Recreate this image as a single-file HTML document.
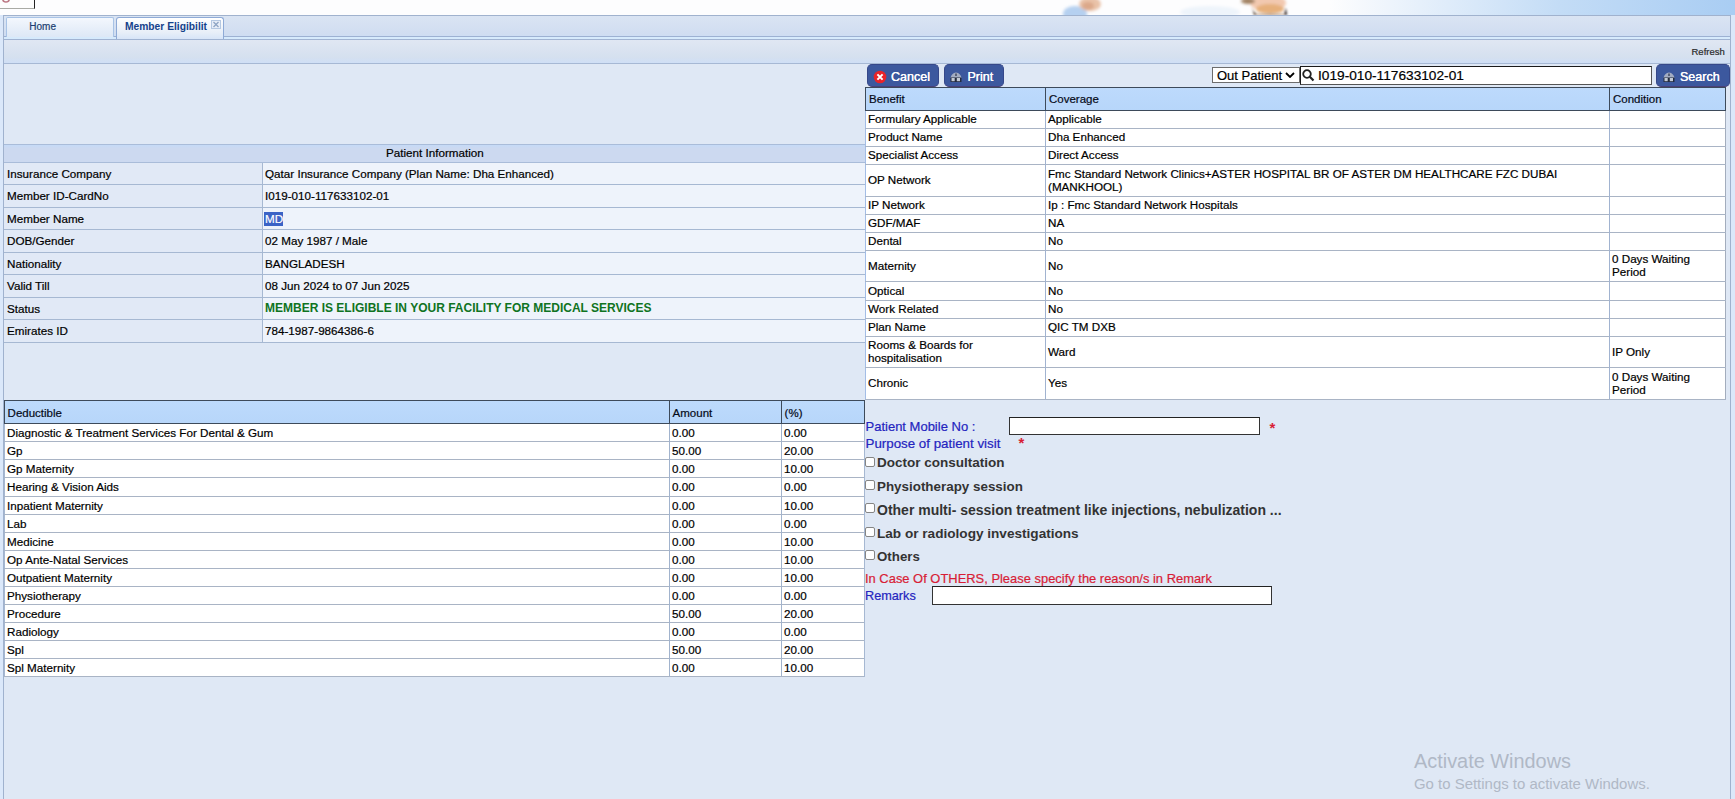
<!DOCTYPE html><html><head><meta charset="utf-8"><style>
*{margin:0;padding:0;box-sizing:border-box}
html,body{width:1735px;height:799px;overflow:hidden;background:#fff;font-family:"Liberation Sans", sans-serif}
.r{position:absolute}
.t{position:absolute;white-space:nowrap;line-height:1;font-family:"Liberation Sans", sans-serif;-webkit-text-stroke:0.2px currentColor}
.b{-webkit-text-stroke:0}
</style></head><body><div class="r" style="left:0px;top:0px;width:1735px;height:15px;background:linear-gradient(to right,#fdfdfe 0px,#fdfdfe 1330px,#e6f0fb 1420px,#c3dcf6 1560px,#a9cdf3 1735px)"></div>
<div class="r" style="left:0px;top:0px;width:35px;height:9px;background:#fdfdfd;border-right:1px solid #222;border-bottom:1px solid #a9aaa4"></div>
<svg class="r" style="left:0;top:0" width="14" height="5"><circle cx="6" cy="-1.2" r="3.2" stroke="#b0606e" stroke-width="1.6" fill="none" opacity=".85"/></svg>
<svg class="r" style="left:1040px;top:0px" width="280" height="15" viewBox="0 0 280 15">
<defs><filter id="bl" x="-50%" y="-50%" width="200%" height="200%"><feGaussianBlur stdDeviation="1.6"/></filter>
<filter id="bl2" x="-50%" y="-50%" width="200%" height="200%"><feGaussianBlur stdDeviation="0.8"/></filter></defs>
<g filter="url(#bl)">
<ellipse cx="35" cy="14" rx="12" ry="8" fill="#b5d0f0"/>
<ellipse cx="50" cy="4" rx="11" ry="7" fill="#e9c2a8"/>
<ellipse cx="48" cy="6" rx="6" ry="4" fill="#dba88a"/>
<ellipse cx="170" cy="12" rx="30" ry="6" fill="#eef4fb"/>
<ellipse cx="228" cy="3" rx="18" ry="8" fill="#f2c9b0"/>
<ellipse cx="230" cy="9" rx="14" ry="5" fill="#e6b07c"/>
<ellipse cx="208" cy="1" rx="7" ry="3" fill="#a08060"/>
</g>
<g filter="url(#bl2)">
<path d="M212 8 Q214 14 220 15 L214 15 Z" fill="#5c4634"/>
<path d="M246 8 L247 15 L244 15 Z" fill="#2e2422"/>
<path d="M216 14 Q230 13 244 14 L244 15 L216 15 Z" fill="#b08a6a"/>
</g>
</svg>
<div class="r" style="left:0px;top:15px;width:1735px;height:784px;background:#dbe8fa"></div>
<div class="r" style="left:3px;top:15px;width:1728px;height:784px;background:#dfe8f5;border-left:1px solid #a0b2ce;border-right:1px solid #a0b2ce"></div>
<div class="r" style="left:3px;top:15px;width:1728px;height:24px;background:linear-gradient(#dae4f3,#d0ddf1 80%,#c8dcf8);border:1px solid #a0b2ce;border-bottom:none"></div>
<div class="r" style="left:4px;top:36px;width:1726px;height:1px;background:#9db1d2"></div>
<div class="r" style="left:4px;top:37px;width:1726px;height:2px;background:#d6eafc"></div>
<div class="r" style="left:4px;top:39px;width:1726px;height:1px;background:#a0b3d2"></div>
<div class="r" style="left:6px;top:17px;width:108px;height:20px;background:linear-gradient(#f3f7fd,#dde8f6);border:1px solid #a8c3e6;border-bottom:none;border-radius:2px 2px 0 0"></div>
<div class="t" style="left:29.3px;top:22px;font-size:10px;color:#213f72;font-weight:normal;">Home</div>
<div class="r" style="left:116px;top:17px;width:108px;height:22px;background:linear-gradient(#ffffff,#e7eef8 70%,#d7e5f8);border:1px solid #8eaad6;border-bottom:none;border-radius:3px 3px 0 0"></div>
<div class="t b" style="left:125px;top:21.5px;font-size:10.25px;color:#15428b;font-weight:bold;">Member Eligibilit</div>
<div class="r" style="left:211px;top:20px;width:10px;height:9px;background:#e8eef8;border:1px solid #b5c8e2"></div>
<svg class="r" style="left:212px;top:21px" width="8" height="7"><path d="M1.5 1 L6.5 6 M6.5 1 L1.5 6" stroke="#8ea4c4" stroke-width="1.3"/></svg>
<div class="r" style="left:4px;top:40px;width:1726px;height:24px;background:linear-gradient(#e0e7f3,#d5e0ef 75%,#cfdff6);border-bottom:1px solid #a6b8d4"></div>
<div class="t" style="left:1691.5px;top:46.5px;font-size:9.5px;color:#2a2a2a;font-weight:normal;">Refresh</div>
<div class="r" style="left:4px;top:144px;width:861px;height:19px;background:linear-gradient(#c5daf7,#ccd9f0 20%,#ccd9f0);border-top:1px solid #a9bcd9;border-bottom:1px solid #a9bcd9"></div>
<div class="t" style="left:386px;top:147px;font-size:11.67px;color:#000;font-weight:normal;">Patient Information</div>
<div class="r" style="left:4px;top:163px;width:258px;height:21px;background:#e1e9f6"></div>
<div class="r" style="left:263px;top:163px;width:602px;height:21px;background:#eef3fb"></div>
<div class="r" style="left:4px;top:184px;width:861px;height:1px;background:#a6b8d2"></div>
<div class="t" style="left:7px;top:167.5px;font-size:11.67px;color:#000;font-weight:normal;">Insurance Company</div>
<div class="t" style="left:265px;top:167.5px;font-size:11.67px;color:#000;font-weight:normal;">Qatar Insurance Company (Plan Name: Dha Enhanced)</div>
<div class="r" style="left:4px;top:185px;width:258px;height:22px;background:#e1e9f6"></div>
<div class="r" style="left:263px;top:185px;width:602px;height:22px;background:#eef3fb"></div>
<div class="r" style="left:4px;top:207px;width:861px;height:1px;background:#a6b8d2"></div>
<div class="t" style="left:7px;top:190.0px;font-size:11.67px;color:#000;font-weight:normal;">Member ID-CardNo</div>
<div class="t" style="left:265px;top:190.0px;font-size:11.67px;color:#000;font-weight:normal;">I019-010-117633102-01</div>
<div class="r" style="left:4px;top:208px;width:258px;height:21px;background:#e1e9f6"></div>
<div class="r" style="left:263px;top:208px;width:602px;height:21px;background:#eef3fb"></div>
<div class="r" style="left:4px;top:229px;width:861px;height:1px;background:#a6b8d2"></div>
<div class="t" style="left:7px;top:212.5px;font-size:11.67px;color:#000;font-weight:normal;">Member Name</div>
<div class="r" style="left:264px;top:212px;width:19px;height:14px;background:#3b63c6"></div>
<div class="t" style="left:265px;top:212.5px;font-size:11.67px;color:#fff;font-weight:normal;">MD</div>
<div class="r" style="left:4px;top:230px;width:258px;height:22px;background:#e1e9f6"></div>
<div class="r" style="left:263px;top:230px;width:602px;height:22px;background:#eef3fb"></div>
<div class="r" style="left:4px;top:252px;width:861px;height:1px;background:#a6b8d2"></div>
<div class="t" style="left:7px;top:235.0px;font-size:11.67px;color:#000;font-weight:normal;">DOB/Gender</div>
<div class="t" style="left:265px;top:235.0px;font-size:11.67px;color:#000;font-weight:normal;">02 May 1987 / Male</div>
<div class="r" style="left:4px;top:253px;width:258px;height:21px;background:#e1e9f6"></div>
<div class="r" style="left:263px;top:253px;width:602px;height:21px;background:#eef3fb"></div>
<div class="r" style="left:4px;top:274px;width:861px;height:1px;background:#a6b8d2"></div>
<div class="t" style="left:7px;top:257.5px;font-size:11.67px;color:#000;font-weight:normal;">Nationality</div>
<div class="t" style="left:265px;top:257.5px;font-size:11.67px;color:#000;font-weight:normal;">BANGLADESH</div>
<div class="r" style="left:4px;top:275px;width:258px;height:22px;background:#e1e9f6"></div>
<div class="r" style="left:263px;top:275px;width:602px;height:22px;background:#eef3fb"></div>
<div class="r" style="left:4px;top:297px;width:861px;height:1px;background:#a6b8d2"></div>
<div class="t" style="left:7px;top:280.0px;font-size:11.67px;color:#000;font-weight:normal;">Valid Till</div>
<div class="t" style="left:265px;top:280.0px;font-size:11.67px;color:#000;font-weight:normal;">08 Jun 2024 to 07 Jun 2025</div>
<div class="r" style="left:4px;top:298px;width:258px;height:21px;background:#e1e9f6"></div>
<div class="r" style="left:263px;top:298px;width:602px;height:21px;background:#eef3fb"></div>
<div class="r" style="left:4px;top:319px;width:861px;height:1px;background:#a6b8d2"></div>
<div class="t" style="left:7px;top:302.5px;font-size:11.67px;color:#000;font-weight:normal;">Status</div>
<div class="t b" style="left:265px;top:302.0px;font-size:12px;color:#0f7322;font-weight:bold;">MEMBER IS ELIGIBLE IN YOUR FACILITY FOR MEDICAL SERVICES</div>
<div class="r" style="left:4px;top:320px;width:258px;height:22px;background:#e1e9f6"></div>
<div class="r" style="left:263px;top:320px;width:602px;height:22px;background:#eef3fb"></div>
<div class="r" style="left:4px;top:342px;width:861px;height:1px;background:#a6b8d2"></div>
<div class="t" style="left:7px;top:325.0px;font-size:11.67px;color:#000;font-weight:normal;">Emirates ID</div>
<div class="t" style="left:265px;top:325.0px;font-size:11.67px;color:#000;font-weight:normal;">784-1987-9864386-6</div>
<div class="r" style="left:262px;top:163px;width:1px;height:179px;background:#a6b8d2"></div>
<div class="r" style="left:4px;top:400px;width:861px;height:24px;background:linear-gradient(#bddafc,#b7d6fa);border:1px solid #3d4a5a"></div>
<div class="r" style="left:669px;top:401px;width:1px;height:22px;background:#3d4a5a"></div>
<div class="r" style="left:781px;top:401px;width:1px;height:22px;background:#3d4a5a"></div>
<div class="t" style="left:7.6px;top:407.5px;font-size:11.5px;color:#050a18;font-weight:normal;">Deductible</div>
<div class="t" style="left:672.6px;top:407.5px;font-size:11.5px;color:#050a18;font-weight:normal;">Amount</div>
<div class="t" style="left:784.6px;top:407.5px;font-size:11.5px;color:#050a18;font-weight:normal;">(%)</div>
<div class="r" style="left:4px;top:424px;width:861px;height:253px;background:#fff;border-left:1px solid #a6b8d2"></div>
<div class="r" style="left:4px;top:441px;width:861px;height:1px;background:#a9b4c5"></div>
<div class="t" style="left:7px;top:426.5px;font-size:11.67px;color:#000;font-weight:normal;">Diagnostic &amp; Treatment Services For Dental &amp; Gum</div>
<div class="t" style="left:672px;top:426.5px;font-size:11.67px;color:#000;font-weight:normal;">0.00</div>
<div class="t" style="left:784px;top:426.5px;font-size:11.67px;color:#000;font-weight:normal;">0.00</div>
<div class="r" style="left:4px;top:459px;width:861px;height:1px;background:#a9b4c5"></div>
<div class="t" style="left:7px;top:444.5px;font-size:11.67px;color:#000;font-weight:normal;">Gp</div>
<div class="t" style="left:672px;top:444.5px;font-size:11.67px;color:#000;font-weight:normal;">50.00</div>
<div class="t" style="left:784px;top:444.5px;font-size:11.67px;color:#000;font-weight:normal;">20.00</div>
<div class="r" style="left:4px;top:477px;width:861px;height:1px;background:#a9b4c5"></div>
<div class="t" style="left:7px;top:462.5px;font-size:11.67px;color:#000;font-weight:normal;">Gp Maternity</div>
<div class="t" style="left:672px;top:462.5px;font-size:11.67px;color:#000;font-weight:normal;">0.00</div>
<div class="t" style="left:784px;top:462.5px;font-size:11.67px;color:#000;font-weight:normal;">10.00</div>
<div class="r" style="left:4px;top:496px;width:861px;height:1px;background:#a9b4c5"></div>
<div class="t" style="left:7px;top:481.0px;font-size:11.67px;color:#000;font-weight:normal;">Hearing &amp; Vision Aids</div>
<div class="t" style="left:672px;top:481.0px;font-size:11.67px;color:#000;font-weight:normal;">0.00</div>
<div class="t" style="left:784px;top:481.0px;font-size:11.67px;color:#000;font-weight:normal;">0.00</div>
<div class="r" style="left:4px;top:514px;width:861px;height:1px;background:#a9b4c5"></div>
<div class="t" style="left:7px;top:499.5px;font-size:11.67px;color:#000;font-weight:normal;">Inpatient Maternity</div>
<div class="t" style="left:672px;top:499.5px;font-size:11.67px;color:#000;font-weight:normal;">0.00</div>
<div class="t" style="left:784px;top:499.5px;font-size:11.67px;color:#000;font-weight:normal;">10.00</div>
<div class="r" style="left:4px;top:532px;width:861px;height:1px;background:#a9b4c5"></div>
<div class="t" style="left:7px;top:517.5px;font-size:11.67px;color:#000;font-weight:normal;">Lab</div>
<div class="t" style="left:672px;top:517.5px;font-size:11.67px;color:#000;font-weight:normal;">0.00</div>
<div class="t" style="left:784px;top:517.5px;font-size:11.67px;color:#000;font-weight:normal;">0.00</div>
<div class="r" style="left:4px;top:550px;width:861px;height:1px;background:#a9b4c5"></div>
<div class="t" style="left:7px;top:535.5px;font-size:11.67px;color:#000;font-weight:normal;">Medicine</div>
<div class="t" style="left:672px;top:535.5px;font-size:11.67px;color:#000;font-weight:normal;">0.00</div>
<div class="t" style="left:784px;top:535.5px;font-size:11.67px;color:#000;font-weight:normal;">10.00</div>
<div class="r" style="left:4px;top:568px;width:861px;height:1px;background:#a9b4c5"></div>
<div class="t" style="left:7px;top:553.5px;font-size:11.67px;color:#000;font-weight:normal;">Op Ante-Natal Services</div>
<div class="t" style="left:672px;top:553.5px;font-size:11.67px;color:#000;font-weight:normal;">0.00</div>
<div class="t" style="left:784px;top:553.5px;font-size:11.67px;color:#000;font-weight:normal;">10.00</div>
<div class="r" style="left:4px;top:586px;width:861px;height:1px;background:#a9b4c5"></div>
<div class="t" style="left:7px;top:571.5px;font-size:11.67px;color:#000;font-weight:normal;">Outpatient Maternity</div>
<div class="t" style="left:672px;top:571.5px;font-size:11.67px;color:#000;font-weight:normal;">0.00</div>
<div class="t" style="left:784px;top:571.5px;font-size:11.67px;color:#000;font-weight:normal;">10.00</div>
<div class="r" style="left:4px;top:604px;width:861px;height:1px;background:#a9b4c5"></div>
<div class="t" style="left:7px;top:589.5px;font-size:11.67px;color:#000;font-weight:normal;">Physiotherapy</div>
<div class="t" style="left:672px;top:589.5px;font-size:11.67px;color:#000;font-weight:normal;">0.00</div>
<div class="t" style="left:784px;top:589.5px;font-size:11.67px;color:#000;font-weight:normal;">0.00</div>
<div class="r" style="left:4px;top:622px;width:861px;height:1px;background:#a9b4c5"></div>
<div class="t" style="left:7px;top:607.5px;font-size:11.67px;color:#000;font-weight:normal;">Procedure</div>
<div class="t" style="left:672px;top:607.5px;font-size:11.67px;color:#000;font-weight:normal;">50.00</div>
<div class="t" style="left:784px;top:607.5px;font-size:11.67px;color:#000;font-weight:normal;">20.00</div>
<div class="r" style="left:4px;top:640px;width:861px;height:1px;background:#a9b4c5"></div>
<div class="t" style="left:7px;top:625.5px;font-size:11.67px;color:#000;font-weight:normal;">Radiology</div>
<div class="t" style="left:672px;top:625.5px;font-size:11.67px;color:#000;font-weight:normal;">0.00</div>
<div class="t" style="left:784px;top:625.5px;font-size:11.67px;color:#000;font-weight:normal;">0.00</div>
<div class="r" style="left:4px;top:658px;width:861px;height:1px;background:#a9b4c5"></div>
<div class="t" style="left:7px;top:643.5px;font-size:11.67px;color:#000;font-weight:normal;">Spl</div>
<div class="t" style="left:672px;top:643.5px;font-size:11.67px;color:#000;font-weight:normal;">50.00</div>
<div class="t" style="left:784px;top:643.5px;font-size:11.67px;color:#000;font-weight:normal;">20.00</div>
<div class="r" style="left:4px;top:676px;width:861px;height:1px;background:#a9b4c5"></div>
<div class="t" style="left:7px;top:661.5px;font-size:11.67px;color:#000;font-weight:normal;">Spl Maternity</div>
<div class="t" style="left:672px;top:661.5px;font-size:11.67px;color:#000;font-weight:normal;">0.00</div>
<div class="t" style="left:784px;top:661.5px;font-size:11.67px;color:#000;font-weight:normal;">10.00</div>
<div class="r" style="left:669px;top:424px;width:1px;height:252px;background:#a1b3cd"></div>
<div class="r" style="left:781px;top:424px;width:1px;height:252px;background:#a1b3cd"></div>
<div class="r" style="left:864px;top:424px;width:1px;height:253px;background:#a6b8d2"></div>
<div class="r" style="left:867px;top:64px;width:72px;height:23px;background:#3c589e;border:1px solid #36488a;border-bottom-color:#4a3f78;border-radius:5px"></div>
<svg class="r" style="left:873px;top:70px" width="14" height="14"><circle cx="7" cy="7" r="6.3" fill="#e8242a"/><path d="M4.4 4.4 L9.6 9.6 M9.6 4.4 L4.4 9.6" stroke="#fff" stroke-width="2"/></svg>
<div class="t" style="left:891px;top:70.5px;font-size:12.5px;color:#fff;font-weight:normal;text-shadow:0 0 .3px #fff">Cancel</div>
<div class="r" style="left:944px;top:64px;width:60px;height:23px;background:#3c589e;border:1px solid #36488a;border-bottom-color:#4a3f78;border-radius:5px"></div>
<svg class="r" style="left:950px;top:72px" width="12" height="10"><path d="M0.5 6 Q1.5 1 6 0.5 Q10.5 1 11.5 6 Z" fill="#a3acc2"/><rect x="0.5" y="5.5" width="11" height="4.5" fill="#232b3e"/><rect x="1.5" y="6" width="3.2" height="3.2" fill="#c3cad6"/><rect x="6.8" y="6" width="3.2" height="3.2" fill="#c3cad6"/><rect x="5.3" y="1.5" width="1.4" height="2.5" fill="#3a4258"/></svg>
<div class="t" style="left:967.5px;top:70.5px;font-size:12.5px;color:#fff;font-weight:normal;text-shadow:0 0 .3px #fff">Print</div>
<div class="r" style="left:1656px;top:64px;width:74px;height:23px;background:#3c589e;border:1px solid #36488a;border-bottom-color:#4a3f78;border-radius:5px"></div>
<svg class="r" style="left:1663px;top:72px" width="12" height="10"><path d="M0.5 6 Q1.5 1 6 0.5 Q10.5 1 11.5 6 Z" fill="#a3acc2"/><rect x="0.5" y="5.5" width="11" height="4.5" fill="#232b3e"/><rect x="1.5" y="6" width="3.2" height="3.2" fill="#c3cad6"/><rect x="6.8" y="6" width="3.2" height="3.2" fill="#c3cad6"/><rect x="5.3" y="1.5" width="1.4" height="2.5" fill="#3a4258"/></svg>
<div class="t" style="left:1680px;top:70.5px;font-size:12.5px;color:#fff;font-weight:normal;text-shadow:0 0 .3px #fff">Search</div>
<div class="r" style="left:1212px;top:67px;width:88px;height:16px;background:#fff;border:1px solid #6d6d6d"></div>
<div class="t" style="left:1217px;top:68.5px;font-size:13px;color:#000;font-weight:normal;">Out Patient</div>
<svg class="r" style="left:1285px;top:72px" width="10" height="6"><path d="M1 1 L5 5 L9 1" stroke="#000" stroke-width="1.8" fill="none"/></svg>
<div class="r" style="left:1300px;top:66px;width:352px;height:19px;background:#fff;border:1px solid #555;border-top-color:#1a1a1a;border-left-color:#1a1a1a"></div>
<svg class="r" style="left:1302px;top:69px" width="13" height="13"><circle cx="5" cy="5" r="3.8" stroke="#222" stroke-width="1.8" fill="none"/><path d="M7.8 7.8 L11.5 11.5" stroke="#222" stroke-width="2.2"/></svg>
<div class="t" style="left:1318px;top:69px;font-size:13.7px;color:#000;font-weight:normal;">I019-010-117633102-01</div>
<div class="r" style="left:865px;top:87px;width:861px;height:24px;background:linear-gradient(#bddafc,#b7d6fa);border:1px solid #3d4a5a"></div>
<div class="r" style="left:1045px;top:88px;width:1px;height:22px;background:#3d4a5a"></div>
<div class="r" style="left:1609px;top:88px;width:1px;height:22px;background:#3d4a5a"></div>
<div class="t" style="left:869px;top:94px;font-size:11.5px;color:#050a18;font-weight:normal;">Benefit</div>
<div class="t" style="left:1049px;top:94px;font-size:11.5px;color:#050a18;font-weight:normal;">Coverage</div>
<div class="t" style="left:1613px;top:94px;font-size:11.5px;color:#050a18;font-weight:normal;">Condition</div>
<div class="r" style="left:865px;top:111px;width:861px;height:289px;background:#fff;border-left:1px solid #a3bde6;border-right:1px solid #a3adbd"></div>
<div class="r" style="left:865px;top:128px;width:861px;height:1px;background:#a9b4c5"></div>
<div class="t" style="left:868px;top:112.0px;font-size:11.67px;line-height:13px">Formulary Applicable</div>
<div class="t" style="left:1048px;top:112.0px;font-size:11.67px;line-height:13px">Applicable</div>
<div class="r" style="left:865px;top:146px;width:861px;height:1px;background:#a9b4c5"></div>
<div class="t" style="left:868px;top:130.0px;font-size:11.67px;line-height:13px">Product Name</div>
<div class="t" style="left:1048px;top:130.0px;font-size:11.67px;line-height:13px">Dha Enhanced</div>
<div class="r" style="left:865px;top:164px;width:861px;height:1px;background:#a9b4c5"></div>
<div class="t" style="left:868px;top:148.0px;font-size:11.67px;line-height:13px">Specialist Access</div>
<div class="t" style="left:1048px;top:148.0px;font-size:11.67px;line-height:13px">Direct Access</div>
<div class="r" style="left:865px;top:196px;width:861px;height:1px;background:#a9b4c5"></div>
<div class="t" style="left:868px;top:173.0px;font-size:11.67px;line-height:13px">OP Network</div>
<div class="t" style="left:1048px;top:166.5px;font-size:11.67px;line-height:13px">Fmc Standard Network Clinics+ASTER HOSPITAL BR OF ASTER DM HEALTHCARE FZC DUBAI<br>(MANKHOOL)</div>
<div class="r" style="left:865px;top:214px;width:861px;height:1px;background:#a9b4c5"></div>
<div class="t" style="left:868px;top:198.0px;font-size:11.67px;line-height:13px">IP Network</div>
<div class="t" style="left:1048px;top:198.0px;font-size:11.67px;line-height:13px">Ip : Fmc Standard Network Hospitals</div>
<div class="r" style="left:865px;top:232px;width:861px;height:1px;background:#a9b4c5"></div>
<div class="t" style="left:868px;top:216.0px;font-size:11.67px;line-height:13px">GDF/MAF</div>
<div class="t" style="left:1048px;top:216.0px;font-size:11.67px;line-height:13px">NA</div>
<div class="r" style="left:865px;top:250px;width:861px;height:1px;background:#a9b4c5"></div>
<div class="t" style="left:868px;top:234.0px;font-size:11.67px;line-height:13px">Dental</div>
<div class="t" style="left:1048px;top:234.0px;font-size:11.67px;line-height:13px">No</div>
<div class="r" style="left:865px;top:281px;width:861px;height:1px;background:#a9b4c5"></div>
<div class="t" style="left:868px;top:258.5px;font-size:11.67px;line-height:13px">Maternity</div>
<div class="t" style="left:1048px;top:258.5px;font-size:11.67px;line-height:13px">No</div>
<div class="t" style="left:1612px;top:252.0px;font-size:11.67px;line-height:13px">0 Days Waiting<br>Period</div>
<div class="r" style="left:865px;top:300px;width:861px;height:1px;background:#a9b4c5"></div>
<div class="t" style="left:868px;top:283.5px;font-size:11.67px;line-height:13px">Optical</div>
<div class="t" style="left:1048px;top:283.5px;font-size:11.67px;line-height:13px">No</div>
<div class="r" style="left:865px;top:318px;width:861px;height:1px;background:#a9b4c5"></div>
<div class="t" style="left:868px;top:302.0px;font-size:11.67px;line-height:13px">Work Related</div>
<div class="t" style="left:1048px;top:302.0px;font-size:11.67px;line-height:13px">No</div>
<div class="r" style="left:865px;top:336px;width:861px;height:1px;background:#a9b4c5"></div>
<div class="t" style="left:868px;top:320.0px;font-size:11.67px;line-height:13px">Plan Name</div>
<div class="t" style="left:1048px;top:320.0px;font-size:11.67px;line-height:13px">QIC TM DXB</div>
<div class="r" style="left:865px;top:367px;width:861px;height:1px;background:#a9b4c5"></div>
<div class="t" style="left:868px;top:338.0px;font-size:11.67px;line-height:13px">Rooms &amp; Boards for<br>hospitalisation</div>
<div class="t" style="left:1048px;top:344.5px;font-size:11.67px;line-height:13px">Ward</div>
<div class="t" style="left:1612px;top:344.5px;font-size:11.67px;line-height:13px">IP Only</div>
<div class="r" style="left:865px;top:399px;width:861px;height:1px;background:#a9b4c5"></div>
<div class="t" style="left:868px;top:376.0px;font-size:11.67px;line-height:13px">Chronic</div>
<div class="t" style="left:1048px;top:376.0px;font-size:11.67px;line-height:13px">Yes</div>
<div class="t" style="left:1612px;top:369.5px;font-size:11.67px;line-height:13px">0 Days Waiting<br>Period</div>
<div class="r" style="left:1045px;top:111px;width:1px;height:288px;background:#a1b3d0"></div>
<div class="r" style="left:1609px;top:111px;width:1px;height:288px;background:#a1b3d0"></div>
<div class="t" style="left:865.5px;top:420px;font-size:13px;color:#2424bf;font-weight:normal;">Patient Mobile No :</div>
<div class="r" style="left:1009px;top:417px;width:251px;height:18px;background:#fff;border:1px solid #333;border-top-color:#222"></div>
<div class="t b" style="left:1269.5px;top:419.5px;font-size:15px;color:#d81d36;font-weight:bold;">*</div>
<div class="t" style="left:865.5px;top:436.5px;font-size:13.34px;color:#2424bf;font-weight:normal;">Purpose of patient visit</div>
<div class="t b" style="left:1018.5px;top:435px;font-size:15px;color:#d81d36;font-weight:bold;">*</div>
<div class="r" style="left:865px;top:457px;width:10px;height:10px;background:#fff;border:1px solid #858585;border-radius:2px"></div>
<div class="t b" style="left:877px;top:456.0px;font-size:13.5px;color:#333;font-weight:bold;">Doctor consultation</div>
<div class="r" style="left:865px;top:480px;width:10px;height:10px;background:#fff;border:1px solid #858585;border-radius:2px"></div>
<div class="t b" style="left:877px;top:480.0px;font-size:13.4px;color:#333;font-weight:bold;">Physiotherapy session</div>
<div class="r" style="left:865px;top:503px;width:10px;height:10px;background:#fff;border:1px solid #858585;border-radius:2px"></div>
<div class="t b" style="left:877px;top:503.0px;font-size:14.0px;color:#333;font-weight:bold;">Other multi- session treatment like injections, nebulization ...</div>
<div class="r" style="left:865px;top:527px;width:10px;height:10px;background:#fff;border:1px solid #858585;border-radius:2px"></div>
<div class="t b" style="left:877px;top:526.5px;font-size:13.6px;color:#333;font-weight:bold;">Lab or radiology investigations</div>
<div class="r" style="left:865px;top:550px;width:10px;height:10px;background:#fff;border:1px solid #858585;border-radius:2px"></div>
<div class="t b" style="left:877px;top:550.0px;font-size:13.3px;color:#333;font-weight:bold;">Others</div>
<div class="t" style="left:865px;top:572.7px;font-size:12.93px;color:#d81d36;font-weight:normal;">In Case Of OTHERS, Please specify the reason/s in Remark</div>
<div class="t" style="left:865px;top:589.5px;font-size:12.7px;color:#2424bf;font-weight:normal;">Remarks</div>
<div class="r" style="left:932px;top:586px;width:340px;height:19px;background:#fff;border:1px solid #333;border-top-color:#222"></div>
<div class="t b" style="left:1414px;top:751.5px;font-size:19.9px;color:#b0b8c6;font-weight:normal;">Activate Windows</div>
<div class="t b" style="left:1414px;top:776.5px;font-size:14.95px;color:#b0b8c6;font-weight:normal;">Go to Settings to activate Windows.</div></body></html>
